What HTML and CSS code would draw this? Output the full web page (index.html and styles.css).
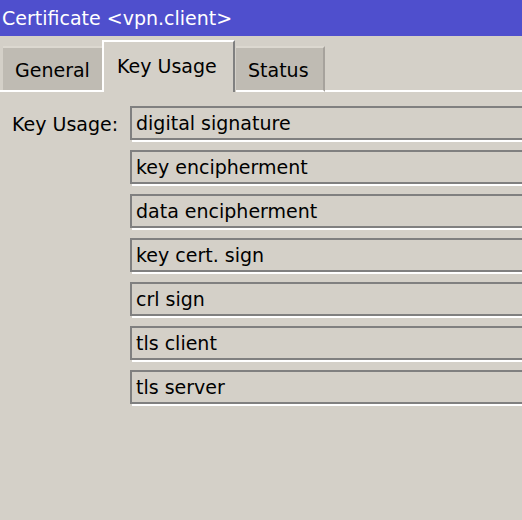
FILE: index.html
```html
<!DOCTYPE html>
<html>
<head>
<meta charset="utf-8">
<title>Certificate</title>
<link rel="stylesheet" href="styles.css">
</head>
<body>
<div class="window">
  <div class="titlebar">Certificate &lt;vpn.client&gt;</div>
  <div class="tabstrip">
    <div class="tab-lead"></div>
    <div class="tab tab-general">General</div>
    <div class="tab tab-active">Key Usage</div>
    <div class="tab tab-status">Status</div>
    <div class="tab-fill"></div>
  </div>
  <div class="form">
    <div class="label">Key Usage:</div>
    <div class="fields">
      <div class="field">digital signature</div>
      <div class="field">key encipherment</div>
      <div class="field">data encipherment</div>
      <div class="field">key cert. sign</div>
      <div class="field">crl sign</div>
      <div class="field">tls client</div>
      <div class="field">tls server</div>
    </div>
  </div>
</div>
</body>
</html>
```
FILE: styles.css
```css
html, body {
  margin: 0;
  padding: 0;
  width: 522px;
  height: 520px;
  overflow: hidden;
  background: #d4d0c8;
}
.window {
  width: 522px;
  height: 520px;
  overflow: hidden;
  font-family: "DejaVu Sans", Verdana, sans-serif;
  font-size: 19px;
  color: #000;
}
.titlebar {
  height: 36px;
  line-height: 36px;
  padding-left: 2px;
  background: #4f4fcd;
  color: #fff;
  white-space: nowrap;
}
.tabstrip {
  display: flex;
  align-items: flex-end;
  height: 56px;
}
.tab-lead {
  flex-shrink: 0;
  width: 3px;
  border-bottom: 2px solid #fff;
}
.tab-fill {
  flex: 1;
  border-bottom: 2px solid #fff;
}
.tab {
  flex-shrink: 0;
  box-sizing: border-box;
  line-height: 22px;
  white-space: nowrap;
}
.tab-general {
  width: 99px;
  padding: 11px 0 9px 12px;
  background: #bfbbb3;
  border-top: 2px solid #dcd8d0;
  border-bottom: 2px solid #fff;
}
.tab-active {
  width: 133px;
  padding: 13px 0 15px 13px;
  border-top: 2px solid #fff;
  border-left: 2px solid #fff;
  border-right: 2px solid #808080;
}
.tab-status {
  width: 89px;
  padding: 11px 0 9px 12px;
  margin-left: 1px;
  background: #bfbbb3;
  border-top: 2px solid #dcd8d0;
  border-right: 2px solid #a6a29c;
  border-bottom: 2px solid #fff;
}
.form {
  display: flex;
  margin-top: 14px;
}
.label {
  flex-shrink: 0;
  box-sizing: border-box;
  width: 130px;
  padding: 3px 0 0 12px;
  line-height: 30px;
  white-space: nowrap;
}
.fields {
  flex-shrink: 0;
  display: flex;
  flex-direction: column;
  gap: 10px;
  width: 420px;
}
.field {
  box-sizing: border-box;
  height: 34px;
  line-height: 30px;
  padding-left: 4px;
  border: 2px solid #808080;
  box-shadow: 2px 2px 0 #fff;
  white-space: nowrap;
}
```
